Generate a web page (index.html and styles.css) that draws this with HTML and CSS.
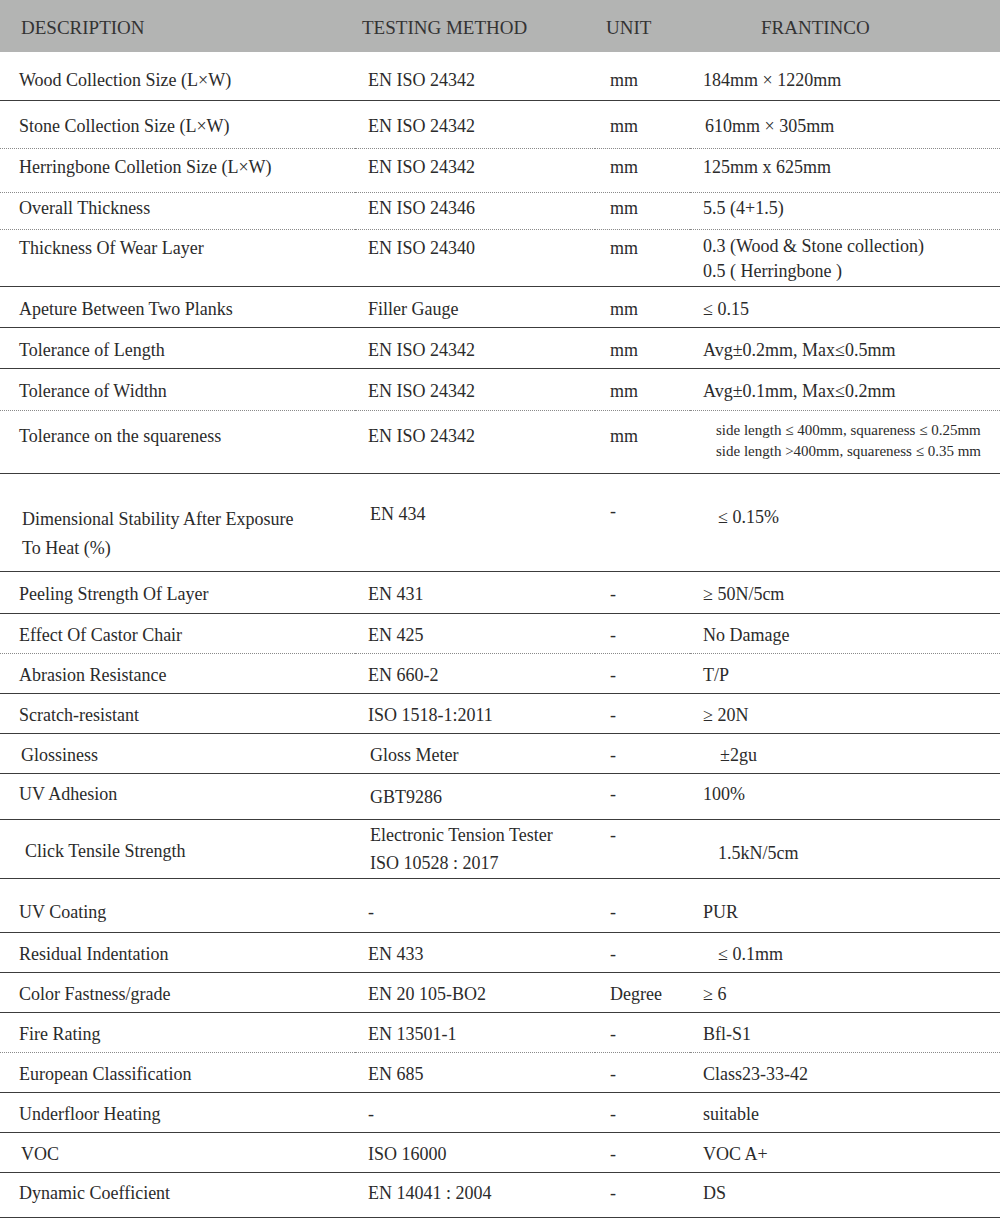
FILE: index.html
```html
<!DOCTYPE html>
<html>
<head>
<meta charset="utf-8">
<link rel="stylesheet" href="styles.css">
</head>
<body>
<table class="spec">
  <colgroup>
    <col class="c1"><col class="c2"><col class="c3"><col class="c4">
  </colgroup>
  <thead>
    <tr class="head">
      <th class="h-desc">DESCRIPTION</th>
      <th class="h-method">TESTING METHOD</th>
      <th class="h-unit">UNIT</th>
      <th class="h-fr">FRANTINCO</th>
    </tr>
  </thead>
  <tbody>
    <tr class="r48 pb"><td>Wood Collection Size (L×W)</td><td>EN ISO 24342</td><td>mm</td><td>184mm × 1220mm</td></tr>
    <tr class="r48 dot"><td>Stone Collection Size (L×W)</td><td>EN ISO 24342</td><td>mm</td><td class="i2">610mm × 305mm</td></tr>
    <tr class="r44 dot up5"><td>Herringbone Colletion Size (L×W)</td><td>EN ISO 24342</td><td>mm</td><td>125mm x 625mm</td></tr>
    <tr class="r37 dot up5"><td>Overall Thickness</td><td>EN ISO 24346</td><td>mm</td><td>5.5 (4+1.5)</td></tr>
    <tr class="r57 top"><td>Thickness Of Wear Layer</td><td>EN ISO 24340</td><td>mm</td><td class="two">0.3 (Wood &amp; Stone collection)<br>0.5 ( Herringbone )</td></tr>
    <tr class="r41"><td>Apeture Between Two Planks</td><td>Filler Gauge</td><td>mm</td><td>≤ 0.15</td></tr>
    <tr class="r41"><td>Tolerance of Length</td><td>EN ISO 24342</td><td>mm</td><td>Avg±0.2mm, Max≤0.5mm</td></tr>
    <tr class="r42 dot"><td>Tolerance of Widthn</td><td>EN ISO 24342</td><td>mm</td><td>Avg±0.1mm, Max≤0.2mm</td></tr>
    <tr class="r63 sq"><td>Tolerance on the squareness</td><td>EN ISO 24342</td><td>mm</td><td class="small">side length ≤ 400mm, squareness ≤ 0.25mm<br>side length &gt;400mm, squareness ≤ 0.35 mm</td></tr>
    <tr class="r98 dim"><td class="i3"><span class="tall">Dimensional Stability After Exposure<br>To Heat (%)</span></td><td class="i2">EN 434</td><td>-</td><td class="i15">≤ 0.15%</td></tr>
    <tr class="r42"><td>Peeling Strength Of Layer</td><td>EN 431</td><td>-</td><td>≥ 50N/5cm</td></tr>
    <tr class="r40 dot"><td>Effect Of Castor Chair</td><td>EN 425</td><td>-</td><td>No Damage</td></tr>
    <tr class="r40"><td>Abrasion Resistance</td><td>EN 660-2</td><td>-</td><td>T/P</td></tr>
    <tr class="r40"><td>Scratch-resistant</td><td>ISO 1518-1:2011</td><td>-</td><td>≥ 20N</td></tr>
    <tr class="r40"><td class="i2">Glossiness</td><td class="i2">Gloss Meter</td><td>-</td><td class="i17">±2gu</td></tr>
    <tr class="r46 up4"><td>UV Adhesion</td><td class="i2 low">GBT9286</td><td>-</td><td>100%</td></tr>
    <tr class="r59 click"><td class="i6">Click Tensile Strength</td><td class="i2 tall">Electronic Tension Tester<br>ISO 10528 : 2017</td><td class="up">-</td><td class="i15 low">1.5kN/5cm</td></tr>
    <tr class="r54 bot"><td>UV Coating</td><td>-</td><td>-</td><td>PUR</td></tr>
    <tr class="r40"><td>Residual Indentation</td><td>EN 433</td><td>-</td><td class="i15">≤ 0.1mm</td></tr>
    <tr class="r40"><td>Color Fastness/grade</td><td>EN 20 105-BO2</td><td class="i0">Degree</td><td>≥ 6</td></tr>
    <tr class="r40 dot"><td>Fire Rating</td><td>EN 13501-1</td><td>-</td><td>Bfl-S1</td></tr>
    <tr class="r40"><td>European Classification</td><td>EN 685</td><td>-</td><td>Class23-33-42</td></tr>
    <tr class="r40"><td>Underfloor Heating</td><td>-</td><td>-</td><td>suitable</td></tr>
    <tr class="r40"><td class="i2">VOC</td><td>ISO 16000</td><td>-</td><td>VOC A+</td></tr>
    <tr class="r45 up4"><td>Dynamic Coefficient</td><td>EN 14041 : 2004</td><td>-</td><td>DS</td></tr>
  </tbody>
</table>
</body>
</html>
```
FILE: styles.css
```css
html, body {
  margin: 0;
  padding: 0;
  background: #ffffff;
}

.spec {
  width: 1000px;
  border-collapse: collapse;
  table-layout: fixed;
  font-family: "Liberation Serif", "Times New Roman", serif;
  font-size: 18px;
  color: #2b2b2b;
}

.c1 { width: 355px; }
.c2 { width: 240px; }
.c3 { width: 95px; }
.c4 { width: 310px; }

.head {
  background: #b3b4b3;
  height: 52px;
}

.head th {
  font-weight: normal;
  font-size: 19px;
  text-align: left;
  color: #333333;
  padding: 4px 0 0 0;
  vertical-align: middle;
}

.h-desc { padding-left: 21px !important; }
.h-method { padding-left: 7px !important; }
.h-unit { padding-left: 11px !important; }
.h-fr { padding-left: 71px !important; }

tbody td {
  padding: 4px 0 0 0;
  border-bottom: 1px solid #3c3c3c;
  vertical-align: middle;
  line-height: 22px;
  white-space: nowrap;
}

tbody td:nth-child(1) { padding-left: 19px; }
tbody td:nth-child(2) { padding-left: 13px; }
tbody td:nth-child(3) { padding-left: 15px; }
tbody td:nth-child(4) { padding-left: 13px; }

tr.dot td { border-bottom: 1px dotted #8a8a8a; }

.r37 { height: 37px; }
.r40 { height: 40px; }
.r41 { height: 41px; }
.r42 { height: 42px; }
.r44 { height: 44px; }
.r45 { height: 45px; }
.r46 { height: 46px; }
.r48 { height: 48px; }
.r54 { height: 54px; }
.r57 { height: 57px; }
.r59 { height: 59px; }
.r63 { height: 63px; }
.r98 { height: 98px; }

tbody tr.pb td { padding-top: 8px; }
tbody tr.up5 td { padding-top: 0; padding-bottom: 6px; }
tbody tr.up4 td { padding-top: 0; padding-bottom: 4px; }

tr.top td { vertical-align: top; padding-top: 7px; }
tr.top td.two { padding-top: 4px; line-height: 25px; }

tr.sq td { padding-top: 0; padding-bottom: 12px; }
tr.sq td.small {
  font-size: 15px;
  line-height: 21px;
  padding-left: 26px;
  padding-bottom: 2px;
}

tbody td.i2 { padding-left: 15px; }
tbody tr td.i3:first-child { padding-left: 22px; }
tbody tr td.i6:first-child { padding-left: 25px; }
tbody td.i15 { padding-left: 28px; }
tbody td.i17 { padding-left: 30px; }
tbody tr td.i2:first-child { padding-left: 21px; }

tr.dim td { vertical-align: top; padding-top: 32px; }
tr.dim td.i3 { padding-top: 31px; line-height: 29px; }
tr.dim td:nth-child(2) { padding-top: 29px; }
tr.dim td:nth-child(3) { padding-top: 26px; }

tbody tr td.low { padding-top: 2px; padding-bottom: 0; }
tr.click td.tall { line-height: 28px; padding-top: 0; }
tr.click td.up { vertical-align: top; padding-top: 4px; }
tr.click td.low { padding-top: 8px; }

tr.bot td { vertical-align: bottom; padding-bottom: 9px; }
```
